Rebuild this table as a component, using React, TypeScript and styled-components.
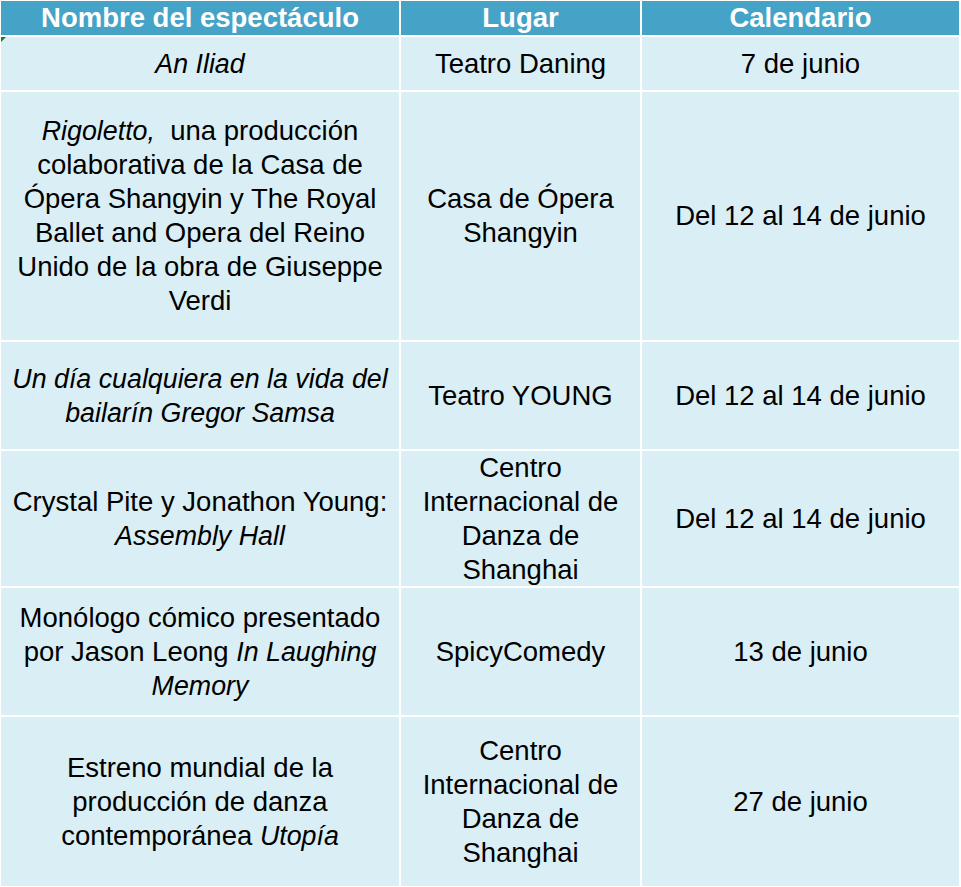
import styled, { createGlobalStyle } from "styled-components";

const GlobalStyle = createGlobalStyle`
  html, body {
    margin: 0;
    padding: 0;
    background: #fff;
  }
  body {
    font-family: "Liberation Sans", Arial, sans-serif;
  }
`;

const Table = styled.div`
  display: grid;
  grid-template-columns: 398px 239px 317px;
  grid-template-rows: 34px 53px 248px 107px 135px 127px 169px;
  gap: 2px;
  padding: 1px;
  width: 958px;
  background: #fff;
`;

const Cell = styled.div<{ $head?: boolean; $marker?: boolean }>`
  position: relative;
  display: flex;
  align-items: center;
  justify-content: center;
  text-align: center;
  white-space: nowrap;
  font-size: 27.5px;
  line-height: 34px;
  background: ${(p) => (p.$head ? "#44a3c6" : "#daeef5")};
  color: ${(p) => (p.$head ? "#fff" : "#000")};
  font-weight: ${(p) => (p.$head ? 700 : 400)};

  ${(p) =>
    p.$marker &&
    `
    &::before {
      content: "";
      position: absolute;
      left: 0;
      top: 0;
      border-top: 5px solid #1e7b1e;
      border-right: 5px solid transparent;
    }
  `}
`;

const Header = styled(Cell)`
  padding-bottom: 1px;
`;

const Title = styled.i`
  font-style: italic;
  font-size: 0.975em;
`;

const rows: { show: React.ReactNode; place: React.ReactNode; date: string }[] = [
  {
    show: <Title>An Iliad</Title>,
    place: "Teatro Daning",
    date: "7 de junio",
  },
  {
    show: (
      <>
        <Title>Rigoletto,</Title>&nbsp; una producción
        <br />
        colaborativa de la Casa de
        <br />
        Ópera Shangyin y The Royal
        <br />
        Ballet and Opera del Reino
        <br />
        Unido de la obra de Giuseppe
        <br />
        Verdi
      </>
    ),
    place: (
      <>
        Casa de Ópera
        <br />
        Shangyin
      </>
    ),
    date: "Del 12 al 14 de junio",
  },
  {
    show: (
      <Title>
        Un día cualquiera en la vida del
        <br />
        bailarín Gregor Samsa
      </Title>
    ),
    place: "Teatro YOUNG",
    date: "Del 12 al 14 de junio",
  },
  {
    show: (
      <>
        Crystal Pite y Jonathon Young:
        <br />
        <Title>Assembly Hall</Title>
      </>
    ),
    place: (
      <>
        Centro
        <br />
        Internacional de
        <br />
        Danza de
        <br />
        Shanghai
      </>
    ),
    date: "Del 12 al 14 de junio",
  },
  {
    show: (
      <>
        Monólogo cómico presentado
        <br />
        por Jason Leong <Title>In Laughing</Title>
        <br />
        <Title>Memory</Title>
      </>
    ),
    place: "SpicyComedy",
    date: "13 de junio",
  },
  {
    show: (
      <>
        Estreno mundial de la
        <br />
        producción de danza
        <br />
        contemporánea <Title>Utopía</Title>
      </>
    ),
    place: (
      <>
        Centro
        <br />
        Internacional de
        <br />
        Danza de
        <br />
        Shanghai
      </>
    ),
    date: "27 de junio",
  },
];

const App = () => {
  return (
    <>
      <GlobalStyle />
      <Table>
        <Header $head>Nombre del espectáculo</Header>
        <Header $head>Lugar</Header>
        <Header $head>Calendario</Header>
        {rows.map((r, i) => (
          <>
            <Cell key={`s${i}`} $marker={i === 0}>
              <div>{r.show}</div>
            </Cell>
            <Cell key={`p${i}`}>
              <div>{r.place}</div>
            </Cell>
            <Cell key={`d${i}`}>
              <div>{r.date}</div>
            </Cell>
          </>
        ))}
      </Table>
    </>
  );
};

export default App;
